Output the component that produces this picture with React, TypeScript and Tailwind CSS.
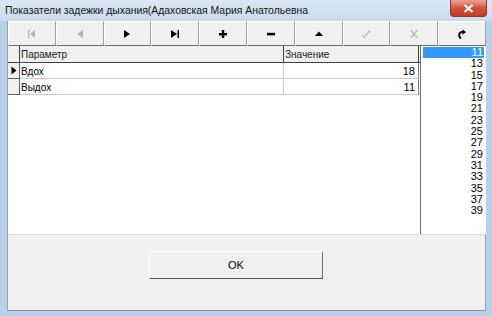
import React from "react";

const G = "#b8b8b8";

function Ic({ i }: { i: number }) {
  switch (i) {
    case 0:
      return (
        <svg width="10" height="8" viewBox="0 0 10 8">
          <rect x="1" y="0" width="1.5" height="8" fill={G} />
          <path d="M3 4 L8 0 L8 8 Z" fill={G} />
        </svg>
      );
    case 1:
      return (
        <svg width="10" height="8" viewBox="0 0 10 8">
          <path d="M2 4 L8 0 L8 8 Z" fill={G} />
        </svg>
      );
    case 2:
      return (
        <svg width="10" height="8" viewBox="0 0 10 8">
          <path d="M2 0 L8 4 L2 8 Z" fill="#000" />
        </svg>
      );
    case 3:
      return (
        <svg width="10" height="8" viewBox="0 0 10 8">
          <path d="M1 0 L7 4 L1 8 Z" fill="#000" />
          <rect x="7.5" y="0" width="1.5" height="8" fill="#000" />
        </svg>
      );
    case 4:
      return (
        <svg width="10" height="10" viewBox="0 0 10 10">
          <rect x="1" y="4" width="8" height="2.4" fill="#000" />
          <rect x="3.8" y="1" width="2.4" height="8" fill="#000" />
        </svg>
      );
    case 5:
      return (
        <svg width="10" height="10" viewBox="0 0 10 10">
          <rect x="1" y="3.8" width="8" height="2.6" fill="#000" />
        </svg>
      );
    case 6:
      return (
        <svg width="10" height="8" viewBox="0 0 10 8">
          <path d="M1 6 L5 1.5 L9 6 Z" fill="#000" />
        </svg>
      );
    case 7:
      return (
        <svg width="10" height="10" viewBox="0 0 10 10">
          <path d="M1 6 L3 8.5 L9 1.5" stroke={G} strokeWidth="1.2" fill="none" />
        </svg>
      );
    case 8:
      return (
        <svg width="10" height="10" viewBox="0 0 10 10">
          <path d="M2 1.5 L8 8.5 M8 1.5 L2 8.5" stroke={G} strokeWidth="1.2" fill="none" />
        </svg>
      );
    default:
      return (
        <svg width="10" height="10" viewBox="0 0 10 10">
          <path d="M4 9.5 C1.5 8 1.5 4 4 3.2 L6 3" stroke="#000" strokeWidth="2" fill="none" />
          <path d="M5.5 0.5 L9 3 L5.5 5.8 Z" fill="#000" />
        </svg>
      );
  }
}

const values = [11, 13, 15, 17, 19, 21, 23, 25, 27, 29, 31, 33, 35, 37, 39];

export default function App() {
  return (
    <div className="w-[492px] h-[316px] flex flex-col bg-[#b7d1ec] font-['Liberation_Sans',Arial,sans-serif] text-black overflow-hidden">
      {/* Title bar */}
      <div className="h-[21px] flex items-start justify-between bg-gradient-to-b from-[#dbe7f4] to-[#c8dbef]">
        <div className="pl-[5px] pt-[4px] text-[10.4px] leading-[14px] text-[#141414] whitespace-nowrap">
          Показатели задежки дыхания(Адаховская Мария Анатольевна
        </div>
        <div className="mr-[5px] w-[37px] h-[17px] rounded-b-[4px] border border-t-0 border-[#8a3b30] bg-gradient-to-b from-[#e8a395] via-[#d4503b] to-[#c33a22] flex items-center justify-center">
          <svg width="11" height="9" viewBox="0 0 11 9">
            <path d="M1.5 1 L9.5 8 M9.5 1 L1.5 8" stroke="#fff" strokeWidth="2.2" />
          </svg>
        </div>
      </div>

      {/* Client */}
      <div className="ml-[7px] mr-[6px] mb-[5px] flex-1 flex flex-col bg-[#f0f0f0] border-l border-[#a0a0a0]">
        {/* Toolbar */}
        <div className="h-[25px] grid grid-cols-10">
          {Array.from({ length: 10 }).map((_, i) => (
            <div
              key={i}
              className="flex items-center justify-center bg-[#f0f0f0] border-t border-l border-white border-r border-r-[#a0a0a0] border-b border-b-[#6a6a6a]"
            >
              <Ic i={i} />
            </div>
          ))}
        </div>

        {/* Content */}
        <div className="h-[188px] flex">
          {/* Grid */}
          <div className="w-[412px] bg-white text-[10px] leading-[15px]">
            {/* header */}
            <div className="flex h-[17px] border-b border-[#404040] bg-[#f0f0f0]">
              <div className="w-[12px] border-r border-[#404040]" />
              <div className="w-[264px] border-r border-[#404040] pl-[1px] pt-[1px] text-[#202020]">Параметр</div>
              <div className="w-[135px] border-r border-[#404040] pl-[1px] pt-[1px] text-[#202020]">Значение</div>
            </div>
            {[
              ["Вдох", "18", true],
              ["Выдох", "11", false],
            ].map(([n, v, cur], idx) => (
              <div key={idx} className="flex h-[16px]">
                <div className="w-[12px] border-r border-b border-[#606060] bg-[#f0f0f0] flex items-center justify-center">
                  {cur ? (
                    <svg width="6" height="9" viewBox="0 0 6 9">
                      <path d="M0.5 0.5 L5.5 4.5 L0.5 8.5 Z" fill="#000" />
                    </svg>
                  ) : null}
                </div>
                <div className="w-[264px] border-r border-b border-[#c8c8c8] pl-[1px] pt-[1px]">{n as string}</div>
                <div className="w-[135px] border-r border-r-[#808080] border-b border-b-[#c8c8c8] pr-[3px] pt-[1px] text-right text-[11px]">{v as string}</div>
              </div>
            ))}
          </div>
          {/* Listbox */}
          <div className="flex-1 bg-white border-l border-[#707070] pt-[1px] pl-[2px] pr-[2px] text-[11px]">
            {values.map((v, i) => (
              <div
                key={v}
                className={`h-[11.3px] leading-[11px] text-right pr-[1px] ${i === 0 ? "bg-[#3399ff] text-white" : "text-black"}`}
              >
                {v}
              </div>
            ))}
          </div>
        </div>

        {/* Bottom panel */}
        <div className="flex-1 border-t border-[#d8d8d8] border-b border-b-[#909090] border-r border-r-[#a0a0a0]">
          <div className="ml-[141px] mt-[16px] w-[174px] h-[28px] border-t border-l border-white border-r border-r-[#707070] border-b border-b-[#505050] bg-[#f0f0f0] flex items-center justify-center text-[11px]">
            OK
          </div>
        </div>
      </div>
    </div>
  );
}
